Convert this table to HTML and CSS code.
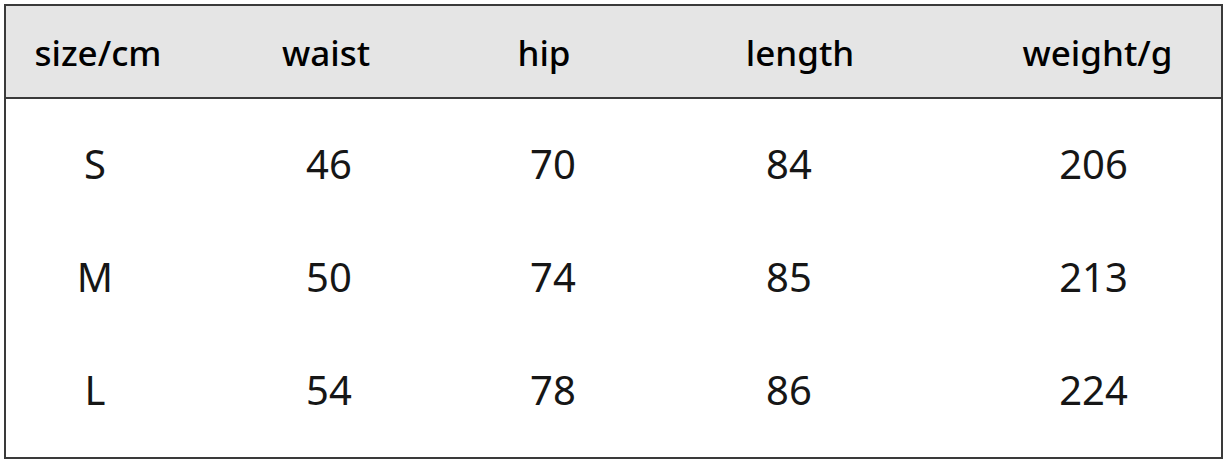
FILE: index.html
```html
<!DOCTYPE html>
<html>
<head>
<meta charset="utf-8">
<link rel="stylesheet" href="styles.css">
</head>
<body>
<div class="chart">
  <div class="head">
    <div class="cell">size/cm</div>
    <div class="cell">waist</div>
    <div class="cell">hip</div>
    <div class="cell">length</div>
    <div class="cell">weight/g</div>
  </div>
  <div class="body">
    <div class="row">
      <div class="cell">S</div><div class="cell">46</div><div class="cell">70</div><div class="cell">84</div><div class="cell last">206</div>
    </div>
    <div class="row">
      <div class="cell">M</div><div class="cell">50</div><div class="cell">74</div><div class="cell">85</div><div class="cell last">213</div>
    </div>
    <div class="row">
      <div class="cell">L</div><div class="cell">54</div><div class="cell">78</div><div class="cell">86</div><div class="cell last">224</div>
    </div>
  </div>
</div>
</body>
</html>
```

FILE: styles.css
```css
html, body {
  margin: 0;
  padding: 0;
  background: #ffffff;
}
body {
  font-family: "Noto Sans", "Open Sans", sans-serif;
}
.chart {
  margin: 4px 0 0 4px;
  width: 1219px;
  height: 455px;
  box-sizing: border-box;
  border: 2px solid #3a3a3a;
  display: flex;
  flex-direction: column;
}
.head {
  height: 96px;
  box-sizing: border-box;
  background: #e5e5e5;
  border-bottom: 2px solid #3a3a3a;
  display: grid;
  grid-template-columns: 184px 272px 164px 348px 1fr;
  align-items: center;
  padding-top: 2px;
  font-size: 35px;
  font-weight: 500;
  color: #000;
}
.cell {
  text-align: center;
}
.body {
  padding: 8px 0 11px;
  font-size: 40px;
  color: #161616;
}
.row {
  height: 113px;
  display: grid;
  grid-template-columns: 178px 290px 158px 314px 1fr;
  align-items: center;
}
.row .last {
  padding-left: 20px;
}
```
